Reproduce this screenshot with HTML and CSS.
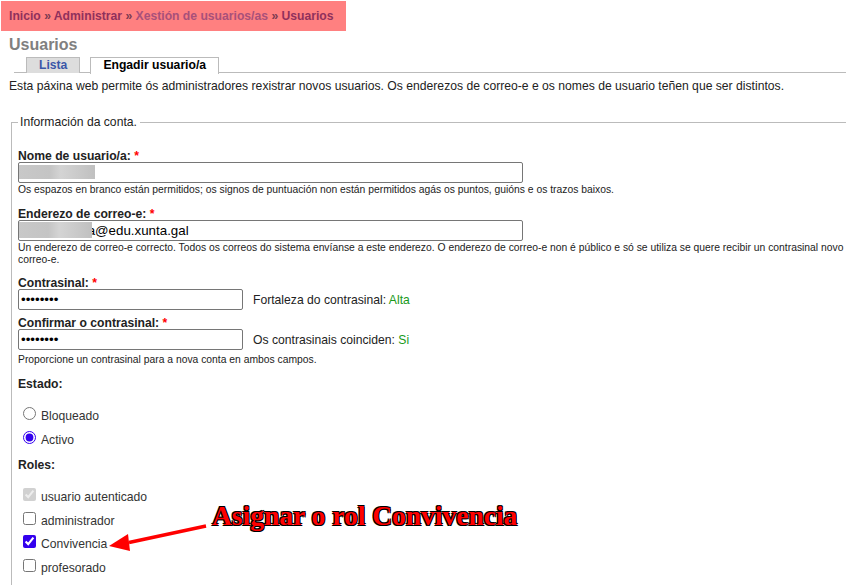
FILE: index.html
```html
<!DOCTYPE html>
<html lang="en">
<head>
  <meta charset="UTF-8">
  <title>Usuarios</title>
  <link rel="stylesheet" href="styles.css">
</head>
<body>
  <div class="breadcrumb">
    <a href="#">Inicio</a> » <a href="#">Administrar</a> » <a class="faded" href="#">Xestión de usuarios/as</a> » <a href="#">Usuarios</a>
  </div>
  <h2 class="title">Usuarios</h2>
  <ul class="tabs">
    <li class="tab"><a href="#">Lista</a></li>
    <li class="tab active"><a href="#">Engadir usuario/a</a></li>
  </ul>
  <p class="intro">Esta páxina web permite ós administradores rexistrar novos usuarios. Os enderezos de correo-e e os nomes de usuario teñen que ser distintos.</p>

  <fieldset class="account">
    <legend>Información da conta.</legend>

    <div class="field">
      <label>Nome de usuario/a: <span class="req">*</span></label>
      <div class="blur-wrap">
        <input class="text wide" type="text">
        <span class="blur blur-name"></span>
      </div>
      <div class="desc">Os espazos en branco están permitidos; os signos de puntuación non están permitidos agás os puntos, guións e os trazos baixos.</div>
    </div>

    <div class="field">
      <label>Enderezo de correo-e: <span class="req">*</span></label>
      <div class="blur-wrap">
        <input class="text wide" type="text" value="xxxxxxxxxxa@edu.xunta.gal">
        <span class="blur blur-mail"></span>
      </div>
      <div class="desc">Un enderezo de correo-e correcto. Todos os correos do sistema envíanse a este enderezo. O enderezo de correo-e non é público e só se utiliza se quere recibir un contrasinal novo correo-e.</div>
    </div>

    <div class="field pass-first">
      <label>Contrasinal: <span class="req">*</span></label>
      <div class="pass-row">
        <input class="text short" type="password" value="12345678">
        <span>Fortaleza do contrasinal: <span class="ok">Alta</span></span>
      </div>
    </div>
    <div class="field pass-second">
      <label>Confirmar o contrasinal: <span class="req">*</span></label>
      <div class="pass-row">
        <input class="text short" type="password" value="12345678">
        <span>Os contrasinais coinciden: <span class="ok">Si</span></span>
      </div>
      <div class="desc">Proporcione un contrasinal para a nova conta en ambos campos.</div>
    </div>

    <div class="group">
      <div class="group-title">Estado:</div>
      <label class="option"><input type="radio" name="estado"> Bloqueado</label>
      <label class="option"><input type="radio" name="estado" checked> Activo</label>
    </div>

    <div class="group">
      <div class="group-title">Roles:</div>
      <label class="option"><input type="checkbox" checked disabled> usuario autenticado</label>
      <label class="option"><input type="checkbox"> administrador</label>
      <label class="option"><input type="checkbox" checked> Convivencia</label>
      <label class="option"><input type="checkbox"> profesorado</label>
    </div>
  </fieldset>

  <!-- annotation drawn on top of the screenshot -->
  <div class="note">Asignar o rol Convivencia</div>
  <svg class="arrow" width="110" height="40" viewBox="0 0 110 40">
    <path d="M98 6 L21 22.5" stroke="#f00" stroke-width="3.5" fill="none"/>
    <path d="M1 26 L20 14 L22 31 Z" fill="#f00"/>
  </svg>
</body>
</html>
```

FILE: styles.css
```css
body {
  font-family: "Liberation Sans", Arial, sans-serif;
  font-size: 12.16px;
  color: #222;
  background-color: #fff;
  margin: 0;
  height: 585px;
  overflow: hidden;
  position: relative;
}
a {
  text-decoration: none;
}
.breadcrumb {
  background-color: #ff8080;
  color: #7a3a50;
  font-weight: bold;
  margin: 1px 0 0 1px;
  width: 337px;
  height: 30px;
  line-height: 31px;
  padding-left: 8px;
}
.breadcrumb a {
  color: #90305c;
}
.breadcrumb a.faded {
  color: #a8507a;
}
.title {
  font-size: 16px;
  line-height: 18px;
  color: #808080;
  margin: 5px 0 0 9px;
}
.tabs {
  list-style: none;
  display: flex;
  gap: 10px;
  margin: 3px 0 0 14px;
  padding: 0 0 0 12px;
  height: 15px;
  border-bottom: 1px solid #bbb;
}
.tab {
  height: 15px;
  padding: 0 12px;
  line-height: 15px;
  font-weight: bold;
  background-color: #ddd;
  border: 1px solid #bbb;
  border-bottom: none;
}
.tab a {
  color: #3a56a8;
}
.tab.active {
  background-color: #fff;
  height: 16px;
}
.tab.active a {
  color: #000;
}
.intro {
  margin: 6px 0 0 9px;
  line-height: 15px;
}
.account {
  box-sizing: border-box;
  margin: 20px 0 0 11px;
  padding: 20px 0 0 6px;
  border: none;
  border-top: 1px solid #bbb;
  border-left: 1px solid #bbb;
  height: 472px;
}
.account legend {
  padding: 0 3px 0 2px;
  margin-left: 0;
  line-height: 16px;
}
.field {
  margin-bottom: 12px;
}
.field label {
  display: block;
  font-weight: bold;
  line-height: 13px;
}
.req {
  color: #f00;
}
.text {
  box-sizing: border-box;
  height: 21px;
  border: 1px solid #767676;
  border-radius: 2px;
  padding: 1px 2px;
  margin: 0;
  display: block;
  font-family: "Liberation Sans", Arial, sans-serif;
  font-size: 13.33px;
  color: #000;
}
.wide {
  width: 505px;
}
.short {
  width: 225px;
}
.blur-wrap {
  position: relative;
  margin-top: -1px;
}
.blur {
  position: absolute;
  left: 1px;
  top: 3px;
  height: 14px;
  background: linear-gradient(90deg, #c8c8c8, #c4c4c4 40%, #d4d4d4 55%, #c0c0c0);
}
.blur-name {
  width: 76px;
}
.blur-mail {
  width: 73px;
  top: 2px;
  height: 16px;
}
.desc {
  font-size: 10.33px;
  line-height: 12px;
  margin-top: 1px;
}
.pass-first {
  margin-top: -1px;
  margin-bottom: 7px;
}
.pass-second {
  margin-bottom: 11px;
}
.pass-row {
  display: flex;
  align-items: center;
  gap: 10px;
  margin-top: -1px;
}
.pass-row + .desc {
  margin-top: 4px;
}
.ok {
  color: #1a9a1a;
}
.group {
  margin-bottom: 7px;
}
.group-title {
  font-weight: bold;
  line-height: 14px;
  margin-bottom: 13.5px;
}
.option {
  display: flex;
  align-items: center;
  gap: 5px;
  height: 23.4px;
  color: #333;
  margin-left: 5px;
}
.option input {
  margin: 0 0 5px 0;
  width: 13px;
  height: 13px;
  accent-color: #3300ee;
}
.note {
  position: absolute;
  left: 212px;
  top: 499px;
  font-family: "Liberation Serif", "Times New Roman", serif;
  font-size: 27.5px;
  font-weight: bold;
  line-height: 34px;
  color: #f00;
  text-shadow: 1px 1px 0 #000, -1px 1px 0 #000, 1px -1px 0 #000, -1px -1px 0 #000;
  white-space: nowrap;
}
.arrow {
  position: absolute;
  left: 108px;
  top: 520px;
}
```
